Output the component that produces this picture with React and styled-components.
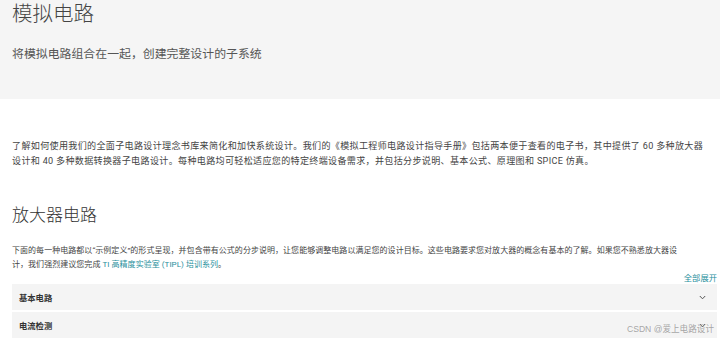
import React from "react";
import styled, { createGlobalStyle } from "styled-components";

const Global = createGlobalStyle`
  html, body { margin: 0; padding: 0; background: #fff; }
  body {
    font-family: Roboto, "Noto Sans CJK SC", "Noto Sans", sans-serif;
    color: #333;
    overflow: hidden;
  }
`;

const Page = styled.div`
  position: relative;
  width: 720px;
  height: 338px;
  overflow: hidden;
`;

const Hero = styled.header`
  background: #f5f5f5;
  height: 99px;
  padding: 0 12px;
  box-sizing: border-box;
  display: flex;
  flex-direction: column;
`;

const Title = styled.h1`
  margin: 0;
  padding-top: 1px;
  font-size: 20.5px;
  line-height: 26px;
  font-weight: 300;
  color: #444;
`;

const Subtitle = styled.p`
  margin: 19px 0 0;
  font-size: 11.9px;
  line-height: 16px;
  font-weight: 400;
  color: #555;
`;

const Content = styled.main`
  padding: 0 3px 0 12px;
`;

const Text = styled.p`
  margin: ${(p) => p.$mt}px 0 0;
  font-size: ${(p) => p.$size}px;
  line-height: ${(p) => p.$lh}px;
  letter-spacing: ${(p) => p.$ls || 0}px;
  color: #444;
  white-space: nowrap;
`;

const Heading = styled.h2`
  margin: 36px 0 0;
  font-size: 17px;
  line-height: 22px;
  font-weight: 300;
  color: #333;
`;

const Link = styled.a`
  color: #1f8f9c;
  text-decoration: none;
`;

const ExpandRow = styled.div`
  display: flex;
  justify-content: flex-end;
  height: 9px;
  align-items: center;
`;

const ExpandAll = styled.a`
  font-size: 8.3px;
  color: #1f8f9c;
  text-decoration: none;
`;

const Accordion = styled.div`
  display: flex;
  flex-direction: column;
  gap: 2px;
  margin-top: 3px;
`;

const Item = styled.div`
  background: #f4f4f4;
  height: 26px;
  display: flex;
  align-items: center;
  justify-content: space-between;
  padding: 0 11px 0 7px;
`;

const ItemLabel = styled.span`
  font-size: 8.3px;
  font-weight: 700;
  color: #333;
`;

const Chevron = styled.svg`
  width: 7px;
  height: 5px;
`;

const Watermark = styled.div`
  position: absolute;
  right: 6px;
  bottom: 4px;
  font-size: 8.6px;
  color: rgba(150, 150, 150, 0.85);
  font-family: "Liberation Sans", "Noto Sans CJK SC", sans-serif;
`;

function Arrow() {
  return (
    <Chevron viewBox="0 0 7 5">
      <path d="M0.8 1 L3.5 3.8 L6.2 1" fill="none" stroke="#555" strokeWidth="1" />
    </Chevron>
  );
}

export default function App() {
  return (
    <Page>
      <Global />
      <Hero>
        <Title>模拟电路</Title>
        <Subtitle>将模拟电路组合在一起，创建完整设计的子系统</Subtitle>
      </Hero>
      <Content>
        <Text $mt={40} $size={9.05} $lh={14.5} $ls={0.33}>
          了解如何使用我们的全面子电路设计理念书库来简化和加快系统设计。我们的《模拟工程师电路设计指导手册》包括两本便于查看的电子书，其中提供了 60 多种放大器
          <br />
          设计和 40 多种数据转换器子电路设计。每种电路均可轻松适应您的特定终端设备需求，并包括分步说明、基本公式、原理图和 SPICE 仿真。
        </Text>
        <Heading>放大器电路</Heading>
        <Text $mt={18} $size={8.0} $lh={14} $ls={0.04}>
          下面的每一种电路都以“示例定义”的形式呈现，并包含带有公式的分步说明，让您能够调整电路以满足您的设计目标。这些电路要求您对放大器的概念有基本的了解。如果您不熟悉放大器设
          <br />
          计，我们强烈建议您完成 <Link href="#">TI 高精度实验室 (TIPL) 培训系列</Link>。
        </Text>
        <ExpandRow>
          <ExpandAll href="#">全部展开</ExpandAll>
        </ExpandRow>
        <Accordion>
          <Item>
            <ItemLabel>基本电路</ItemLabel>
            <Arrow />
          </Item>
          <Item>
            <ItemLabel>电流检测</ItemLabel>
            <Arrow />
          </Item>
        </Accordion>
      </Content>
      <Watermark>CSDN @爱上电路设计</Watermark>
    </Page>
  );
}
